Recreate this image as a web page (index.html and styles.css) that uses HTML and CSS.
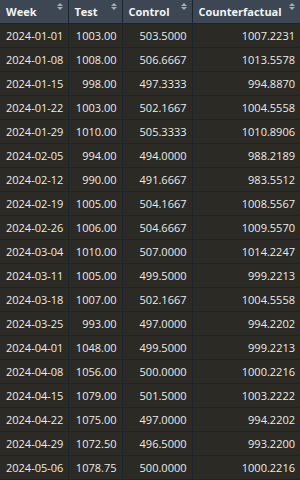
FILE: index.html
```html
<!DOCTYPE html>
<html>
<head>
<meta charset="utf-8">
<link rel="stylesheet" href="styles.css">
</head>
<body>
<table class="grid">
  <colgroup>
    <col class="c-week"><col class="c-test"><col class="c-control"><col class="c-cf">
  </colgroup>
  <thead>
    <tr>
      <th class="left">Week<span class="sort"></span></th>
      <th class="left">Test<span class="sort"></span></th>
      <th class="left">Control<span class="sort"></span></th>
      <th class="left">Counterfactual<span class="sort"></span></th>
    </tr>
  </thead>
  <tbody>
    <tr><td>2024-01-01</td><td class="num">1003.00</td><td class="num">503.5000</td><td class="num">1007.2231</td></tr>
    <tr><td>2024-01-08</td><td class="num">1008.00</td><td class="num">506.6667</td><td class="num">1013.5578</td></tr>
    <tr><td>2024-01-15</td><td class="num">998.00</td><td class="num">497.3333</td><td class="num">994.8870</td></tr>
    <tr><td>2024-01-22</td><td class="num">1003.00</td><td class="num">502.1667</td><td class="num">1004.5558</td></tr>
    <tr><td>2024-01-29</td><td class="num">1010.00</td><td class="num">505.3333</td><td class="num">1010.8906</td></tr>
    <tr><td>2024-02-05</td><td class="num">994.00</td><td class="num">494.0000</td><td class="num">988.2189</td></tr>
    <tr><td>2024-02-12</td><td class="num">990.00</td><td class="num">491.6667</td><td class="num">983.5512</td></tr>
    <tr><td>2024-02-19</td><td class="num">1005.00</td><td class="num">504.1667</td><td class="num">1008.5567</td></tr>
    <tr><td>2024-02-26</td><td class="num">1006.00</td><td class="num">504.6667</td><td class="num">1009.5570</td></tr>
    <tr><td>2024-03-04</td><td class="num">1010.00</td><td class="num">507.0000</td><td class="num">1014.2247</td></tr>
    <tr><td>2024-03-11</td><td class="num">1005.00</td><td class="num">499.5000</td><td class="num">999.2213</td></tr>
    <tr><td>2024-03-18</td><td class="num">1007.00</td><td class="num">502.1667</td><td class="num">1004.5558</td></tr>
    <tr><td>2024-03-25</td><td class="num">993.00</td><td class="num">497.0000</td><td class="num">994.2202</td></tr>
    <tr><td>2024-04-01</td><td class="num">1048.00</td><td class="num">499.5000</td><td class="num">999.2213</td></tr>
    <tr><td>2024-04-08</td><td class="num">1056.00</td><td class="num">500.0000</td><td class="num">1000.2216</td></tr>
    <tr><td>2024-04-15</td><td class="num">1079.00</td><td class="num">501.5000</td><td class="num">1003.2222</td></tr>
    <tr><td>2024-04-22</td><td class="num">1075.00</td><td class="num">497.0000</td><td class="num">994.2202</td></tr>
    <tr><td>2024-04-29</td><td class="num">1072.50</td><td class="num">496.5000</td><td class="num">993.2200</td></tr>
    <tr><td>2024-05-06</td><td class="num">1078.75</td><td class="num">500.0000</td><td class="num">1000.2216</td></tr>
  </tbody>
</table>
</body>
</html>
```

FILE: styles.css
```css
html, body {
  margin: 0;
  padding: 0;
  background: #2a2924;
}
body {
  width: 300px;
  height: 480px;
  overflow: hidden;
  font-family: "Open Sans", "Noto Sans", sans-serif;
  font-size: 11px;
  color: #ecebe6;
}
.grid {
  width: 300px;
  border-collapse: collapse;
  table-layout: fixed;
}
.c-week { width: 68px; }
.c-test { width: 54px; }
.c-control { width: 70px; }
.c-cf { width: 108px; }
.grid th {
  position: relative;
  height: 23px;
  padding: 0 6px;
  background: #3d4753;
  color: #f2f4f6;
  font-size: 11px;
  font-weight: 700;
  text-align: left;
  border-right: 1px solid #1b2530;
  border-bottom: 1px solid #1b2530;
}
.grid td {
  height: 23px;
  padding: 0 5px 0 6px;
  background: #2b2a24;
  border-right: 1px solid #1b2530;
  border-bottom: 1px solid #1b2530;
  white-space: nowrap;
}
.grid th:last-child, .grid td:last-child { border-right: none; }
.grid td.num { text-align: right; }
.sort {
  position: absolute;
  top: 3px;
  right: 5px;
  width: 6px;
  height: 7px;
}
.sort::before, .sort::after {
  content: "";
  position: absolute;
  left: 0;
  border-left: 3px solid transparent;
  border-right: 3px solid transparent;
}
.sort::before {
  top: 0;
  border-bottom: 3px solid #a5acb5;
}
.sort::after {
  bottom: 0;
  border-top: 3px solid #a5acb5;
}
```
